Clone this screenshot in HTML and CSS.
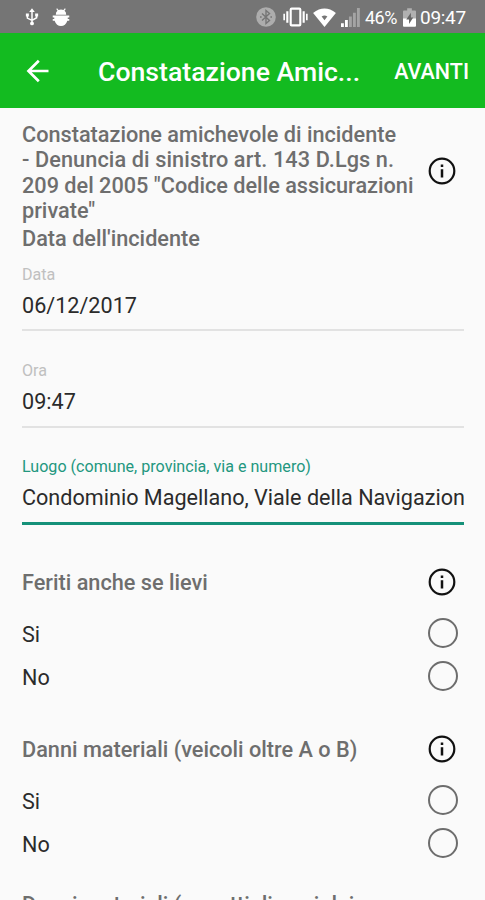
FILE: index.html
```html
<!DOCTYPE html>
<html lang="it">
<head>
<meta charset="utf-8">
<title>Constatazione Amichevole</title>
<link rel="stylesheet" href="styles.css">
</head>
<body>
<svg class="defs" aria-hidden="true">
  <symbol id="info" viewBox="0 0 28 28"><circle cx="14" cy="14" r="12.3" fill="none" stroke="currentColor" stroke-width="2.2"/><path d="M14 12.2v8.2M14 7.4v2.7" stroke="currentColor" stroke-width="2.5"/></symbol>
</svg>
<header class="status">
  <svg class="usb" viewBox="0 0 16 20" fill="none" stroke="currentColor" stroke-width="1.7"><path d="M8 3v14M2.7 8v3.2L8 13.8M13.3 8v2.8L8 13.8"/><path d="M8 0l3.2 4.4H4.8zM1 6h3.4v3.4H1zM11.6 6H15v3.4h-3.4z" fill="currentColor" stroke="none"/><circle cx="8" cy="17.3" r="2.2" fill="currentColor" stroke="none"/></svg>
  <svg class="bug" viewBox="0 0 18 20" fill="currentColor"><path d="M3.5 7Q3.5 4.3 5.3 3L4 1l.9-.7 1.5 1.9q2.6-1 5.2 0L13.1.3 14 1l-1.3 2q1.8 1.3 1.8 4zM.3 8h17.4v2h-1.6v1.7h1.6v1.8h-2Q13.8 19 9 19t-6.7-5.5h-2v-1.8h1.6V10H.3z"/></svg>
  <span class="spacer"></span>
  <svg class="bt" viewBox="0 0 20 20"><circle cx="10" cy="10" r="9.8" fill="#adadad"/><path d="M6 6.5l7.5 7L10 16.5v-13l3.5 3L6 13.5" fill="none" stroke="#757575" stroke-width="1.4"/><path d="M4 9.2h1.6v1.6H4zM14.4 9.2H16v1.6h-1.6z" fill="#757575"/></svg>
  <svg class="vibrate" viewBox="0 0 26 20" fill="none" stroke="currentColor" stroke-width="2.2"><rect x="8" y="1.3" width="10" height="17.4" rx="1"/><path d="M4.5 4v12M21.5 4v12"/><path d="M1.2 6.5v7M24.8 6.5v7" stroke-width="1.7"/></svg>
  <svg class="wifi" viewBox="0 0 24 20"><path d="M0 5.2Q12-4 24 5.2L12 20z" fill="currentColor"/><path d="M9 9Q12 6.8 15 9l-3 3.8z" fill="#757575"/></svg>
  <svg class="signal" viewBox="0 0 20 20"><path d="M0 16h3v4H0zM4.2 12.5h3V20h-3z" fill="#fff"/><path d="M8.4 9h3v11h-3zM12.6 5h3v15h-3zM16.8 0h3v20h-3z" fill="#a4a4a4"/></svg>
  <span class="percent">46%</span>
  <svg class="battery" viewBox="0 0 14 20"><path d="M4.5 0h5v2.5H13q1 0 1 1V12H0V3.5q0-1 1-1h3.5z" fill="#b0b0b0"/><path d="M0 11h14v8q0 1-1 1H1q-1 0-1-1z" fill="#fff"/><path d="M8.5 5L3.5 12.2h3V17l4.500-7H8.500z" fill="#656565"/></svg>
  <span class="clock">09:47</span>
</header>
<nav class="appbar">
  <svg class="back" viewBox="0 0 24 24" fill="none" stroke="currentColor" stroke-width="2.7"><path d="M22.500 12H3M12.800 1.800L2.500 12l10.300 10.200"/></svg>
  <h1 class="title">Constatazione Amic...</h1>
  <span class="next">AVANTI</span>
</nav>
<main class="form">
  <section class="intro">
    <h2 class="heading">Constatazione amichevole di incidente<br><span class="article">- Denuncia di sinistro art. 143 D.Lgs n.</span><br>209 del 2005 "Codice delle assicurazioni<br>private"</h2>
    <svg class="info"><use href="#info"/></svg>
  </section>
  <h2 class="heading date-heading">Data dell'incidente</h2>
  <div class="field"><label class="label">Data</label><div class="value">06/12/2017</div></div>
  <div class="field"><label class="label">Ora</label><div class="value">09:47</div></div>
  <div class="field active"><label class="label">Luogo (comune, provincia, via e numero)</label><div class="value">Condominio Magellano, Viale della Navigazion</div></div>
  <section class="question">
    <div class="question-head"><h2 class="heading">Feriti anche se lievi</h2><svg class="info"><use href="#info"/></svg></div>
    <div class="option"><span>Si</span><i class="radio"></i></div>
    <div class="option"><span>No</span><i class="radio"></i></div>
  </section>
  <section class="question">
    <div class="question-head"><h2 class="heading">Danni materiali (veicoli oltre A o B)</h2><svg class="info"><use href="#info"/></svg></div>
    <div class="option"><span>Si</span><i class="radio"></i></div>
    <div class="option"><span>No</span><i class="radio"></i></div>
  </section>
  <section class="question following">
    <h2 class="heading">Danni materiali (oggetti diversi dai</h2>
  </section>
</main>
</body>
</html>
```
FILE: styles.css
```css
* { box-sizing: border-box; }
html, body { height: 900px; overflow: hidden; }
body { margin: 0; background: #fafafa; color: #2b2b2b; font-family: Roboto, "Liberation Sans", sans-serif; }
h1, h2 { margin: 0; font-weight: 500; white-space: nowrap; }
svg { display: block; flex: none; }
.defs { position: absolute; width: 0; height: 0; }
.status { display: flex; align-items: center; height: 33px; padding: 1px 18px 0 25px; background: #757575; color: #fff; }
.usb { width: 14px; height: 20px; }
.bug { width: 18px; height: 19px; margin-left: 13px; }
.spacer { flex: 1; }
.bt { width: 20px; height: 20px; }
.vibrate { width: 25px; height: 20px; margin-left: 7px; }
.wifi { width: 23px; height: 19px; margin-left: 5px; }
.signal { width: 19px; height: 19px; margin-left: 5px; }
.percent { width: 33px; margin-left: 5px; font-size: 18px; letter-spacing: -0.5px; white-space: nowrap; }
.battery { width: 13px; height: 19px; margin-left: 5px; }
.clock { width: 47px; margin-left: 4px; font-size: 19px; letter-spacing: -0.3px; white-space: nowrap; }
.appbar { display: flex; align-items: center; height: 75px; padding: 0 16px 0 26px; background: #13bb20; color: #fff; }
.back { width: 24px; height: 24px; }
.title { flex: 1; margin-left: 48px; padding-top: 2px; font-size: 26.65px; line-height: 32px; }
.next { padding-top: 2px; font-size: 21.5px; font-weight: 500; }
.form { height: 792px; padding: 14px 21px 0 22px; overflow: hidden; }
.heading { font-size: 21.7px; line-height: 25.3px; color: #6e6e6e; }
.article { letter-spacing: 0.1px; }
.intro { display: flex; justify-content: space-between; }
.info { width: 28px; height: 28px; margin-right: 8px; color: #111; }
.intro .info { margin-top: 35px; }
.date-heading { margin-top: 3px; }
.field { height: 96.5px; padding-top: 30px; border-bottom: 2px solid #e2e2e2; }
.date-heading + .field { height: 80px; padding-top: 13.5px; }
.label { display: block; font-size: 16.1px; line-height: 20px; color: #c0c0c0; }
.value { margin-top: 7px; font-size: 21.6px; line-height: 27px; white-space: nowrap; overflow: hidden; }
.active { height: 97px; padding-top: 29.4px; border-color: #159179; border-bottom-width: 3px; }
.active .label { color: #23977f; }
.question { padding-top: 42px; height: 167px; }
.question-head { display: flex; align-items: center; justify-content: space-between; height: 30px; margin-bottom: 14px; }
.question-head .heading { padding-top: 2px; }
.option { display: flex; align-items: center; justify-content: space-between; height: 43.3px; padding-right: 6px; font-size: 21.6px; }
.option span { padding-top: 3px; }
.radio { width: 30px; height: 30px; border: 2.5px solid #6d6d6d; border-radius: 50%; }
.following { padding-top: 33px; }
```
